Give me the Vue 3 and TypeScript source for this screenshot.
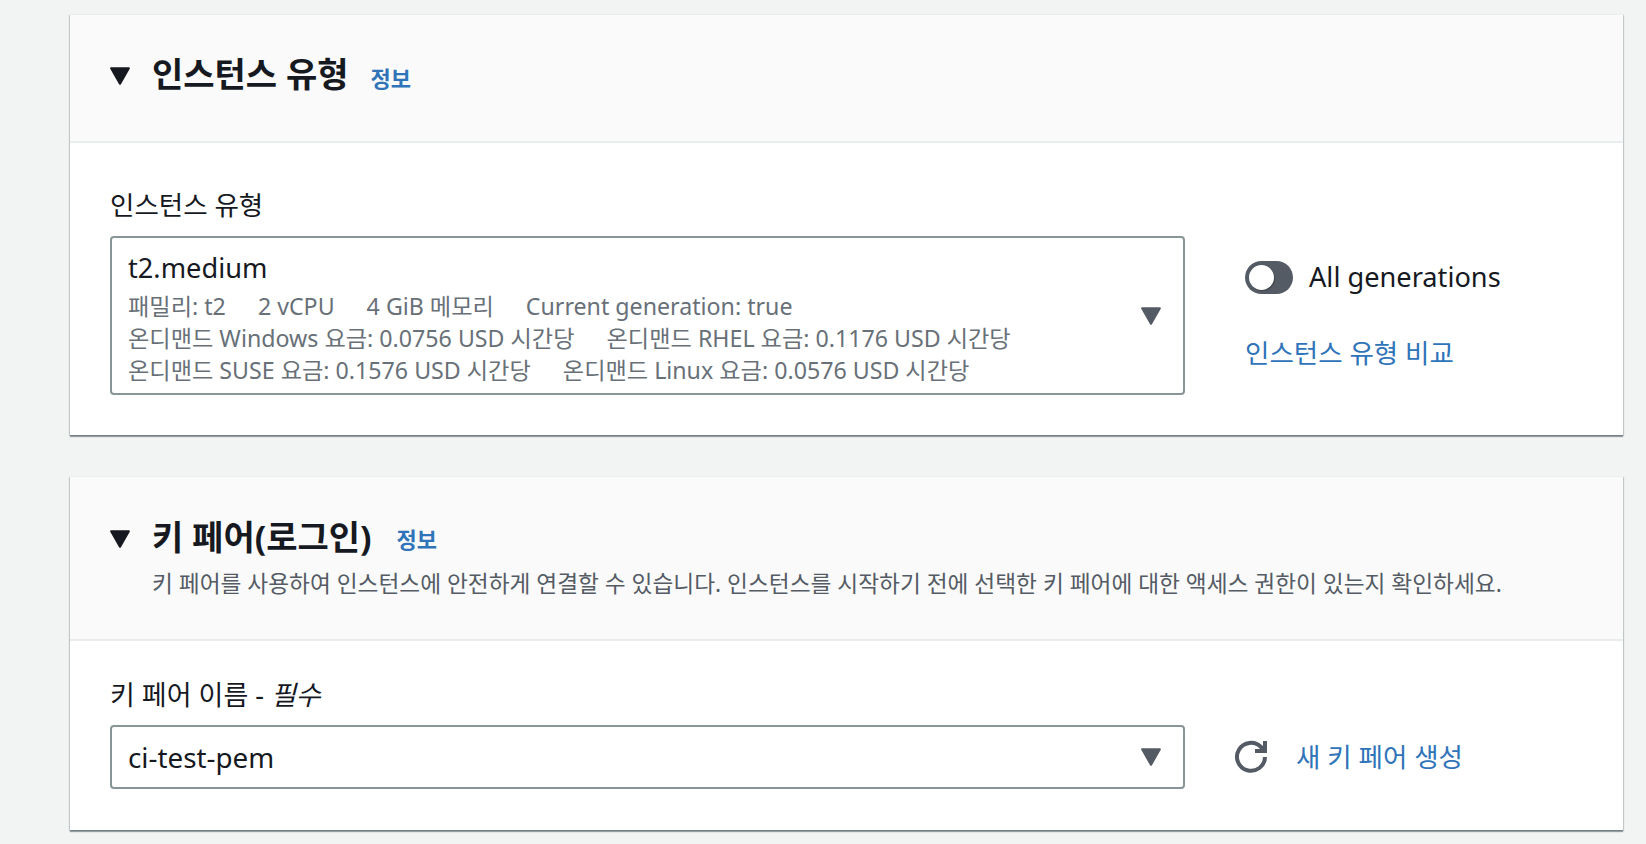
<script setup lang="ts">
const specRows: string[][] = [
  ['패밀리: t2', '2 vCPU', '4 GiB 메모리', 'Current generation: true'],
  ['온디맨드 Windows 요금: 0.0756 USD 시간당', '온디맨드 RHEL 요금: 0.1176 USD 시간당'],
  ['온디맨드 SUSE 요금: 0.1576 USD 시간당', '온디맨드 Linux 요금: 0.0576 USD 시간당'],
]
</script>

<template>
  <div class="page">
    <section class="card">
      <header class="card-head head-plain">
        <div class="title-row">
          <svg class="toggle-arrow" viewBox="0 0 20 18"><path d="M2 2h16l-8 14z" /></svg>
          <h2 class="title">인스턴스 유형</h2>
          <a class="info">정보</a>
        </div>
      </header>
      <div class="card-body body-type">
        <div class="field">
          <label class="label">인스턴스 유형</label>
          <div class="select select-tall">
            <div class="select-text">
              <div class="value value-type">t2.medium</div>
              <div v-for="(row, i) in specRows" :key="i" class="spec-row">
                <span v-for="item in row" :key="item">{{ item }}</span>
              </div>
            </div>
            <svg class="caret" viewBox="0 0 20 18"><path d="M2 2h16l-8 14z" /></svg>
          </div>
        </div>
        <div class="side">
          <div class="switch-row">
            <span class="switch"><span class="knob"></span></span>
            <span class="switch-label">All generations</span>
          </div>
          <a class="link">인스턴스 유형 비교</a>
        </div>
      </div>
    </section>

    <section class="card">
      <header class="card-head head-desc">
        <div class="title-row">
          <svg class="toggle-arrow" viewBox="0 0 20 18"><path d="M2 2h16l-8 14z" /></svg>
          <h2 class="title">키 페어(로그인)</h2>
          <a class="info info-key">정보</a>
        </div>
        <p class="desc">키 페어를 사용하여 인스턴스에 안전하게 연결할 수 있습니다. 인스턴스를 시작하기 전에 선택한 키 페어에 대한 액세스 권한이 있는지 확인하세요.</p>
      </header>
      <div class="card-body body-key">
        <div class="field">
          <label class="label label-key">키 페어 이름 - <i>필수</i></label>
          <div class="select select-short">
            <div class="value">ci-test-pem</div>
            <svg class="caret" viewBox="0 0 20 18"><path d="M2 2h16l-8 14z" /></svg>
          </div>
        </div>
        <div class="key-actions">
          <svg class="refresh" viewBox="0 0 16 16" fill="none">
            <path d="M10 5h5V0" />
            <path d="M15 8a7 7 0 1 1-2-5l2 2" />
          </svg>
          <a class="link">새 키 페어 생성</a>
        </div>
      </div>
    </section>
  </div>
</template>

<style>
html,
body {
  margin: 0;
  background: #f2f3f3;
  overflow: hidden;
}
</style>

<style scoped>
.page {
  height: 844px;
  box-sizing: border-box;
  padding: 14px 23px 0 70px;
  font-family: "Noto Sans", "Noto Sans CJK KR", sans-serif;
  color: #16191f;
  overflow: hidden;
}

.card {
  background: #fff;
  margin-bottom: 41px;
  border-top: 1px solid #eaeded;
  box-shadow: 0 2px 1px 0 rgba(0, 28, 36, 0.35), 1px 1px 1px 0 rgba(0, 28, 36, 0.15), -1px 1px 1px 0 rgba(0, 28, 36, 0.15);
}

.card-head {
  box-sizing: border-box;
  background: #fafafa;
  border-bottom: 2px solid #eaeded;
  padding-left: 40px;
}

.head-plain {
  height: 128px;
  display: flex;
  align-items: center;
  padding-bottom: 8px;
}

.head-desc {
  height: 164px;
  padding-top: 36px;
}

.title-row {
  display: flex;
  align-items: center;
}

.toggle-arrow {
  width: 22px;
  height: 20px;
  margin-left: -1px;
  margin-right: 21px;
  margin-top: 4px;
  fill: #16191f;
  stroke: #16191f;
  stroke-width: 2;
  stroke-linejoin: round;
}

.title {
  margin: 0;
  font-size: 34px;
  line-height: 48px;
  font-weight: 700;
}

.info {
  margin-left: 22px;
  margin-top: 5px;
  font-size: 22px;
  font-weight: 700;
  color: #2f74b9;
}

.info-key {
  margin-left: 25px;
  margin-top: 2px;
}

.desc {
  margin: 7px 0 0 42px;
  font-size: 22.7px;
  line-height: 32px;
  color: #545b64;
  white-space: nowrap;
}

.card-body {
  display: flex;
}

.body-type {
  padding: 43px 0 40px 40px;
}

.body-key {
  padding: 35px 0 41px 40px;
}

.field {
  width: 1075px;
}

.label {
  display: block;
  font-size: 26.5px;
  line-height: 38px;
  margin-bottom: 12px;
}

.label-key {
  font-size: 27px;
  margin-bottom: 11px;
}

.label i {
  font-style: italic;
}

.select {
  box-sizing: border-box;
  display: flex;
  align-items: center;
  justify-content: space-between;
  border: 2px solid #879596;
  border-radius: 4px;
  padding: 0 21px 0 16px;
}

.select-tall {
  height: 159px;
}

.select-short {
  height: 64px;
}

.value {
  font-size: 27.8px;
  line-height: 40px;
}

.value-type {
  font-size: 27.2px;
  margin-top: 2px;
  margin-bottom: 2px;
}

.spec-row {
  display: flex;
  gap: 32px;
  font-size: 23.2px;
  line-height: 32px;
  color: #687078;
}

.caret {
  width: 22px;
  height: 20px;
  fill: #545b64;
  stroke: #545b64;
  stroke-width: 2;
  stroke-linejoin: round;
}

.side {
  margin-left: 60px;
  padding-top: 71px;
}

.switch-row {
  display: flex;
  align-items: center;
  gap: 16px;
  margin-bottom: 37px;
}

.switch {
  display: block;
  width: 48px;
  height: 33px;
  border-radius: 17px;
  background: #545b64;
  position: relative;
}

.knob {
  position: absolute;
  left: 4px;
  top: 4px;
  width: 25px;
  height: 25px;
  border-radius: 50%;
  background: #fff;
  box-shadow: 1px 1px 1px rgba(0, 0, 0, 0.25);
}

.switch-label {
  font-size: 27.2px;
  line-height: 40px;
}

.link {
  font-size: 26.5px;
  line-height: 38px;
  color: #2f74b9;
}

.key-actions {
  display: flex;
  align-items: center;
  margin-left: 50px;
  margin-top: 50px;
  height: 62px;
}

.refresh {
  width: 32px;
  height: 32px;
  margin-right: 29px;
  stroke: #545b64;
  stroke-width: 2;
  overflow: visible;
}
</style>
